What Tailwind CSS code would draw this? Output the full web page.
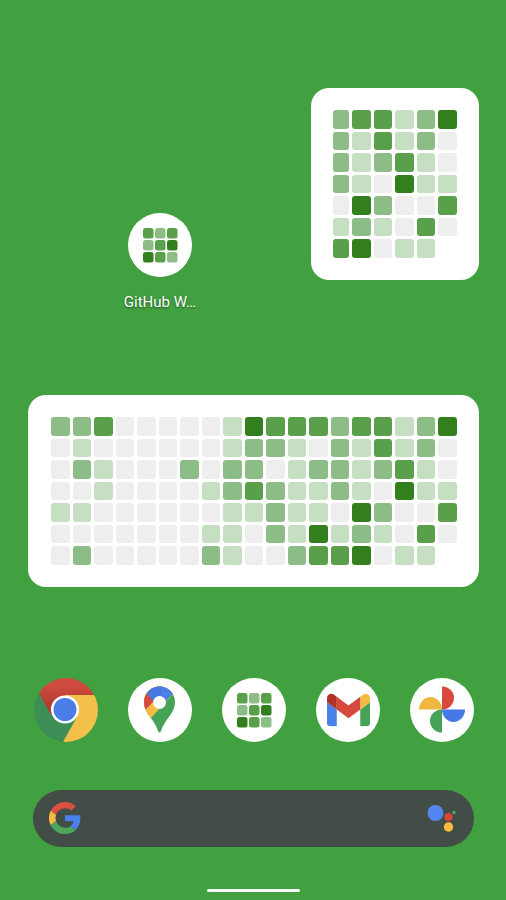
<!DOCTYPE html>
<html lang="en">
<head>
    <meta charset="UTF-8">
    <meta name="viewport" content="width=device-width, initial-scale=1.0">
    <title>Home screen</title>
    <script src="https://cdn.jsdelivr.net/npm/@tailwindcss/browser@4"></script>
</head>

<body class="bg-[#41a03f] min-h-screen flex flex-col font-['Roboto',sans-serif]">
    <!-- Mini contribution grid, shared by the app shortcut and the dock -->
    <svg class="hidden">
        <symbol id="widgetIcon" viewBox="0 0 64 64">
            <rect x="15" y="15" width="10.500" height="10.500" rx="2.500" fill="#5a9f49"/>
            <rect x="27" y="15" width="10.500" height="10.500" rx="2.500" fill="#8dbd87"/>
            <rect x="39" y="15" width="10.500" height="10.500" rx="2.500" fill="#5a9f49"/>
            <rect x="15" y="27" width="10.500" height="10.500" rx="2.500" fill="#8dbd87"/>
            <rect x="27" y="27" width="10.500" height="10.500" rx="2.500" fill="#5a9f49"/>
            <rect x="39" y="27" width="10.500" height="10.500" rx="2.500" fill="#337f1d"/>
            <rect x="15" y="39" width="10.500" height="10.500" rx="2.500" fill="#337f1d"/>
            <rect x="27" y="39" width="10.500" height="10.500" rx="2.500" fill="#5a9f49"/>
            <rect x="39" y="39" width="10.500" height="10.500" rx="2.500" fill="#8dbd87"/>
        </symbol>
    </svg>

    <main class="grow">
        <section class="grid grid-cols-5 items-start pt-[88px] pl-[19px] pr-[17px]">
            <button type="button" class="col-start-2 mt-[125px] flex flex-col items-center gap-[17px]">
                <span class="size-16 rounded-full bg-white">
                    <svg class="size-16"><use href="#widgetIcon"/></svg>
                </span>
                <span class="text-[15px] leading-4 text-white text-shadow-[0_1px_2px_rgb(0_0_0/0.5)] whitespace-nowrap">GitHub W…</span>
            </button>
            <div class="col-start-4 col-span-2 justify-self-center w-[168px] h-48 rounded-[18px] bg-white pt-[22px] px-[22px]">
                <div id="smallWidget" class="grid grid-cols-[16px_repeat(5,1fr)] grid-rows-7 gap-[3px] h-[148px]"></div>
            </div>
        </section>

        <section class="mt-[85px] ml-7 mr-[27px] h-48 rounded-[18px] bg-white pt-[22px] pl-[23px] pr-[22px]">
            <div id="largeWidget" class="grid grid-cols-[repeat(19,1fr)] grid-rows-7 gap-[3px] h-[148px]"></div>
        </section>

        <nav class="mt-[91px] pl-[19px] pr-[17px] grid grid-cols-5 justify-items-center">
            <button type="button" aria-label="Chrome" class="size-16 rounded-full">
                <svg class="size-16" viewBox="0 0 64 64">
                    <defs>
                        <clipPath id="chromeClip"><circle cx="32" cy="32" r="32"/></clipPath>
                        <linearGradient id="chromeRed" x1="0" y1="0" x2="0" y2="1">
                            <stop offset="0.2" stop-color="#d04b3f"/>
                            <stop offset="0.7" stop-color="#b23c31"/>
                        </linearGradient>
                    </defs>
                    <g clip-path="url(#chromeClip)">
                        <rect width="64" height="64" fill="#3e8f57"/>
                        <path d="M31 17H64V64H29L43 39Z" fill="#f3c04a"/>
                        <path d="M0 7V0H64V17H31L17 37L5 15Z" fill="url(#chromeRed)"/>
                    </g>
                    <circle cx="31" cy="31.500" r="14" fill="#fff"/>
                    <circle cx="31" cy="31.500" r="11.500" fill="#4a7de8"/>
                </svg>
            </button>
            <button type="button" aria-label="Maps" class="size-16 rounded-full bg-white">
                <svg class="size-16" viewBox="0 0 64 64">
                    <defs>
                        <clipPath id="pinClip">
                            <path d="M31.500 8.500A15.500 15.500 0 0 1 47 24C47 36 37 40 33 53Q31.500 56 30 53C26 40 16 36 16 24A15.500 15.500 0 0 1 31.500 8.500Z"/>
                        </clipPath>
                    </defs>
                    <g clip-path="url(#pinClip)">
                        <rect width="64" height="64" fill="#46a256"/>
                        <path d="M10 0H60L22 41L10 54Z" fill="#f6bb42"/>
                        <path d="M10 0H38L30 19L17 32L10 40Z" fill="#d6493c"/>
                        <path d="M14 10V0H60L43.500 17L31 30Z" fill="#4678e0"/>
                        <path d="M36 0H60L43.500 17L36 25L31 24Z" fill="#4b80e6"/>
                    </g>
                    <circle cx="31.500" cy="24.500" r="6.500" fill="#fff"/>
                </svg>
            </button>
            <button type="button" aria-label="GitHub Widget" class="size-16 rounded-full bg-white">
                <svg class="size-16"><use href="#widgetIcon"/></svg>
            </button>
            <button type="button" aria-label="Gmail" class="size-16 rounded-full bg-white">
                <svg class="size-16" viewBox="0 0 64 64">
                    <svg x="11" y="15.500" width="43" height="33" viewBox="52 42 88 66">
                        <path fill="#4a80ea" d="M58 108h14V74L52 59v43c0 3.320 2.690 6 6 6"/>
                        <path fill="#46a256" d="M120 108h14c3.320 0 6-2.690 6-6V59l-20 15"/>
                        <path fill="#f3bb42" d="M120 48v26l20-15v-8c0-7.420-8.470-11.650-14.400-7.200"/>
                        <path fill="#d6493c" d="M72 74V48l24 18 24-18v26L96 92"/>
                        <path fill="#b0302a" d="M52 51v8l20 15V48l-5.600-4.200c-5.940-4.450-14.400-.22-14.400 7.200"/>
                    </svg>
                </svg>
            </button>
            <button type="button" aria-label="Photos" class="size-16 rounded-full bg-white">
                <svg class="size-16" viewBox="0 0 64 64">
                    <path d="M32 8.500A12 11.500 0 0 1 32 31.500Z" fill="#d6493c"/>
                    <path d="M9 31.500A11.500 12.500 0 0 1 32 31.500Z" fill="#f0b73f"/>
                    <path d="M32 31.500V54.500A12 11.500 0 0 1 32 31.500Z" fill="#46a256"/>
                    <path d="M32 31.500H55A11.500 12.500 0 0 1 32 31.500Z" fill="#4678e6"/>
                </svg>
            </button>
        </nav>

        <form class="mt-12 ml-[33px] mr-8 h-[57px] rounded-full bg-[#424d48] flex items-center pl-4 pr-[17px]">
            <svg class="size-8 shrink-0 mb-px" viewBox="0 0 48 48">
                <path fill="#dd4f40" d="M24 9.500c3.540 0 6.710 1.220 9.210 3.600l6.850-6.850C35.900 2.380 30.470 0 24 0 14.620 0 6.510 5.380 2.560 13.220l7.980 6.190C12.430 13.720 17.740 9.500 24 9.500z"/>
                <path fill="#4a80ee" d="M46.980 24.550c0-1.570-.15-3.090-.38-4.550H24v9.020h12.940c-.58 2.960-2.260 5.480-4.780 7.180l7.730 6c4.510-4.180 7.090-10.360 7.090-17.650z"/>
                <path fill="#f6bb42" d="M10.530 28.590c-.48-1.450-.76-2.990-.76-4.590s.27-3.140.76-4.590l-7.980-6.190C.92 16.460 0 20.120 0 24c0 3.880.92 7.540 2.560 10.780l7.970-6.190z"/>
                <path fill="#4ca75a" d="M24 48c6.480 0 11.930-2.130 15.890-5.810l-7.730-6c-2.150 1.450-4.920 2.300-8.160 2.300-6.260 0-11.570-4.220-13.470-9.910l-7.980 6.190C6.510 42.620 14.620 48 24 48z"/>
            </svg>
            <input type="search" aria-label="Search" class="grow min-w-0 h-full px-3 text-base text-white outline-none">
            <button type="button" aria-label="Assistant" class="size-8 shrink-0">
                <svg class="size-8" viewBox="0 0 32 32">
                    <circle cx="10.500" cy="10" r="8" fill="#5585ee"/>
                    <circle cx="23.500" cy="14" r="4" fill="#dd4636"/>
                    <circle cx="23.500" cy="24" r="4.700" fill="#f8bc40"/>
                    <circle cx="29" cy="9.500" r="1.800" fill="#4ca75a"/>
                </svg>
            </button>
        </form>
    </main>

    <div class="mx-auto mb-2 w-[93px] h-[3px] rounded-full bg-white/95"></div>

    <script>
        // one string per weekday, one digit per week, "-" for a day still to come
        const days = [
            '2230000014333233124',
            '0100000012210213120',
            '0210002022012212310',
            '0010000123211210411',
            '1100000011211042003',
            '0000000110214121030',
            '020000021002334011-'
        ];
        const levels = {
            '0': 'rounded-[3px] bg-[#eeeeee]',
            '1': 'rounded-[3px] bg-[#c6dfc3]',
            '2': 'rounded-[3px] bg-[#8dbd87]',
            '3': 'rounded-[3px] bg-[#5a9f49]',
            '4': 'rounded-[3px] bg-[#337f1d]',
            '-': ''
        };

        function renderWidget(id, weeks) {
            const widget = document.getElementById(id);
            days.forEach(row => {
                row.slice(-weeks).split('').forEach(level => {
                    const cell = document.createElement('div');
                    cell.className = levels[level];
                    widget.appendChild(cell);
                });
            });
        }

        renderWidget('smallWidget', 6);
        renderWidget('largeWidget', 19);
    </script>
</body>
</html>
